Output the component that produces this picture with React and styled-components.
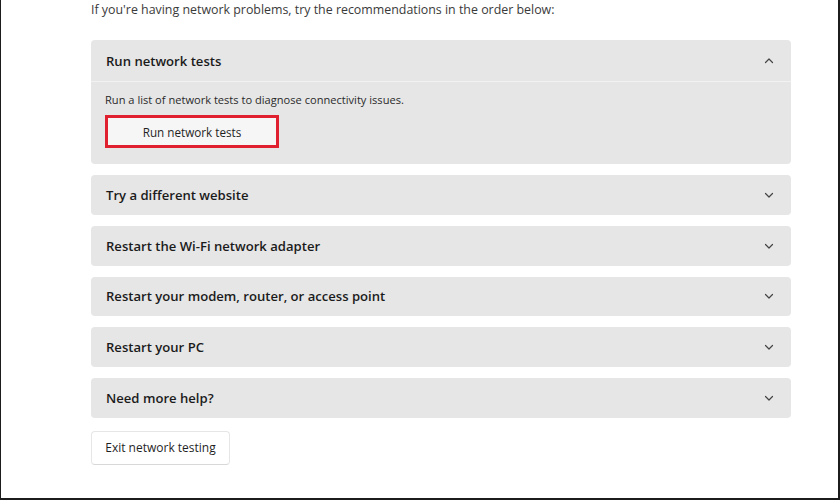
import styled, { createGlobalStyle } from 'styled-components';

const GlobalStyle = createGlobalStyle`
  html, body {
    margin: 0;
    padding: 0;
    background: #fff;
  }
  body {
    font-family: "Open Sans", "Noto Sans", "Liberation Sans", sans-serif;
  }
`;

const Frame = styled.div`
  box-sizing: border-box;
  width: 840px;
  height: 500px;
  border-left: 1px solid #1c1c1c;
  border-right: 2px solid #1c1c1c;
  border-bottom: 2px solid #1c1c1c;
  padding: 0 47px 0 90px;
  overflow: hidden;
`;

const Intro = styled.p`
  margin: 0;
  padding-top: 1px;
  font-size: 12.4px;
  line-height: 17px;
  color: #3a3a3a;
`;

const List = styled.div`
  display: flex;
  flex-direction: column;
  gap: 11px;
  margin-top: 22px;
`;

const Card = styled.div`
  background: #e6e6e6;
  border-radius: 4px;
  overflow: hidden;
`;

const Header = styled.div`
  display: flex;
  align-items: center;
  justify-content: space-between;
  height: ${(p) => (p.$open ? '41px' : '39.75px')};
  padding: 0 16px 0 15px;
  font-size: 13.1px;
  font-weight: 600;
  color: #1b1b1b;
  border-bottom: ${(p) => (p.$open ? '1px solid #f2f2f2' : 'none')};
`;

const Chevron = styled.svg`
  width: 10px;
  height: 10px;
  margin-right: 1px;
`;

const Body = styled.div`
  padding: 9px 14px 16px 14px;
`;

const BodyText = styled.p`
  margin: 0 0 7px;
  font-size: 11.1px;
  line-height: 17px;
  color: #2a2a2a;
`;

const Highlight = styled.div`
  display: inline-block;
  border: 3px solid #e0202e;
`;

const Button = styled.button`
  display: block;
  width: 168px;
  height: 27px;
  border: none;
  background: #f6f6f6;
  font-family: inherit;
  font-size: 11.7px;
  color: #1f1f1f;
  padding: 0;
`;

const ExitButton = styled.button`
  margin-top: 13px;
  width: 139px;
  height: 34px;
  background: #fff;
  border: 1px solid #e6e6e6;
  border-bottom-color: #d8d8d8;
  border-radius: 4px;
  font-family: inherit;
  font-size: 12px;
  font-weight: 500;
  color: #1f1f1f;
  padding: 0;
`;

const Arrow = ({ up }) => (
  <Chevron viewBox="0 0 10 10">
    <path
      d={up ? 'M1.5 6.5 L5 3 L8.5 6.5' : 'M1.5 3.5 L5 7 L8.5 3.5'}
      fill="none"
      stroke="#444"
      strokeWidth="1.2"
      strokeLinecap="round"
      strokeLinejoin="round"
    />
  </Chevron>
);

const items = [
  'Try a different website',
  'Restart the Wi-Fi network adapter',
  'Restart your modem, router, or access point',
  'Restart your PC',
  'Need more help?',
];

export default function App() {
  return (
    <>
      <GlobalStyle />
      <Frame>
        <Intro>If you're having network problems, try the recommendations in the order below:</Intro>
        <List>
          <Card>
            <Header $open>
              Run network tests
              <Arrow up />
            </Header>
            <Body>
              <BodyText>Run a list of network tests to diagnose connectivity issues.</BodyText>
              <Highlight>
                <Button>Run network tests</Button>
              </Highlight>
            </Body>
          </Card>
          {items.map((label) => (
            <Card key={label}>
              <Header>
                {label}
                <Arrow />
              </Header>
            </Card>
          ))}
        </List>
        <ExitButton>Exit network testing</ExitButton>
      </Frame>
    </>
  );
}
